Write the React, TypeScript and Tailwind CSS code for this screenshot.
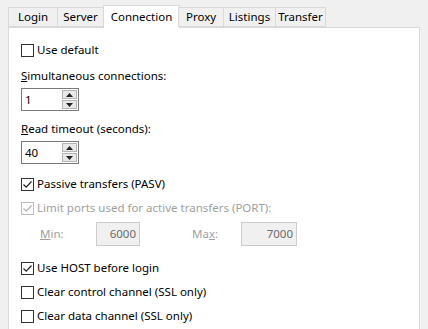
import { useState } from "react";

const tabs = [
  { name: "Login", w: "w-[50px]" },
  { name: "Server", w: "w-[47px]" },
  { name: "Connection", w: "w-[77px]" },
  { name: "Proxy", w: "w-[46px]" },
  { name: "Listings", w: "w-[53px]" },
  { name: "Transfer", w: "w-[51px]" },
];

const Check = ({ checked, disabled }: { checked?: boolean; disabled?: boolean }) => (
  <div
    className={`w-[13px] h-[13px] border bg-white flex items-center justify-center shrink-0 ${
      disabled ? "border-[#bcbcbc]" : "border-[#333333]"
    }`}>
    {checked && (
      <svg width="11" height="11" viewBox="0 0 11 11">
        <path d="M1.5 5.5 L4.2 8.2 L9.5 2.5" fill="none" stroke={disabled ? "#b0b0b0" : "#202020"} strokeWidth="1.2" />
      </svg>
    )}
  </div>
);

const CheckRow = ({
  label,
  checked,
  disabled,
  className,
}: {
  label: string;
  checked?: boolean;
  disabled?: boolean;
  className?: string;
}) => (
  <div className={`flex items-center gap-[3px] h-4 ${className ?? ""}`}>
    <Check checked={checked} disabled={disabled} />
    <span className={disabled ? "text-[#a0a0a0]" : "text-black"}>{label}</span>
  </div>
);

const Arrow = ({ up }: { up?: boolean }) => (
  <svg width="7" height="4" viewBox="0 0 7 4">
    <path d={up ? "M0 4 L3.5 0 L7 4 Z" : "M0 0 L3.5 4 L7 0 Z"} fill="#222" />
  </svg>
);

const Spin = ({ value, className }: { value: string; className?: string }) => (
  <div className={`w-[58px] h-[23px] border border-[#7a7a7a] bg-white flex items-center ${className ?? ""}`}>
    <span className="flex-1 pl-[3px]">{value}</span>
    <div className="flex flex-col mr-[1px] gap-[1px]">
      <div className="w-[15px] h-[9px] bg-[#e8e8e8] border border-[#b5b5b5] flex items-center justify-center">
        <Arrow up />
      </div>
      <div className="w-[15px] h-[9px] bg-[#e8e8e8] border border-[#b5b5b5] flex items-center justify-center">
        <Arrow />
      </div>
    </div>
  </div>
);

export default function App() {
  const [active] = useState("Connection");

  return (
    <div
      className="w-[428px] h-[329px] bg-[#f0f0f0] overflow-hidden text-[11.5px] leading-4"
      style={{ fontFamily: '"Segoe UI", "Noto Sans", sans-serif' }}>
      {/* 탭 */}
      <div className="flex items-end h-[28px] pl-2 relative z-10">
        {tabs.map((t) =>
          t.name === active ? (
            <div
              key={t.name}
              className={`${t.w} h-[23px] bg-white border border-b-0 border-[#d9d9d9] flex items-center justify-center -mx-[1px]`}>
              {t.name}
            </div>
          ) : (
            <div
              key={t.name}
              className={`${t.w} h-[20px] bg-[#f0f0f0] border border-[#d9d9d9] -ml-[1px] first:ml-0 flex items-center justify-center mb-[1px]`}>
              {t.name}
            </div>
          )
        )}
      </div>

      {/* 패널 */}
      <div className="ml-2 w-[412px] h-[310px] -mt-[1px] bg-white border border-[#d9d9d9] pl-[12px] flex flex-col">
        <CheckRow label="Use default" className="mt-[14px]" />

        <div className="mt-[10px] h-4">
          <span className="underline">S</span>imultaneous connections:
        </div>
        <Spin value="1" className="mt-[4px]" />

        <div className="mt-[10px] h-4">
          <span className="underline">R</span>ead timeout (seconds):
        </div>
        <Spin value="40" className="mt-[4px]" />

        <CheckRow label="Passive transfers (PASV)" checked className="mt-[12px]" />
        <CheckRow label="Limit ports used for active transfers (PORT):" checked disabled className="mt-[8px]" />

        <div className="flex items-center mt-[6px] h-[24px] text-[#a0a0a0]">
          <span className="w-[75px] pl-[19px]">
            <span className="underline">M</span>in:
          </span>
          <div className="w-[44px] h-[24px] border border-[#cccccc] bg-[#f0f0f0] flex items-center justify-end pr-[3px] text-[#6d6d6d]">
            6000
          </div>
          <span className="w-[49px] ml-[52px]">
            Ma<span className="underline">x</span>:
          </span>
          <div className="w-[56px] h-[24px] border border-[#cccccc] bg-[#f0f0f0] flex items-center justify-end pr-[3px] text-[#6d6d6d]">
            7000
          </div>
        </div>

        <CheckRow label="Use HOST before login" checked className="mt-[14px]" />
        <CheckRow label="Clear control channel (SSL only)" className="mt-[8px]" />
        <CheckRow label="Clear data channel (SSL only)" className="mt-[8px]" />
      </div>
    </div>
  );
}
